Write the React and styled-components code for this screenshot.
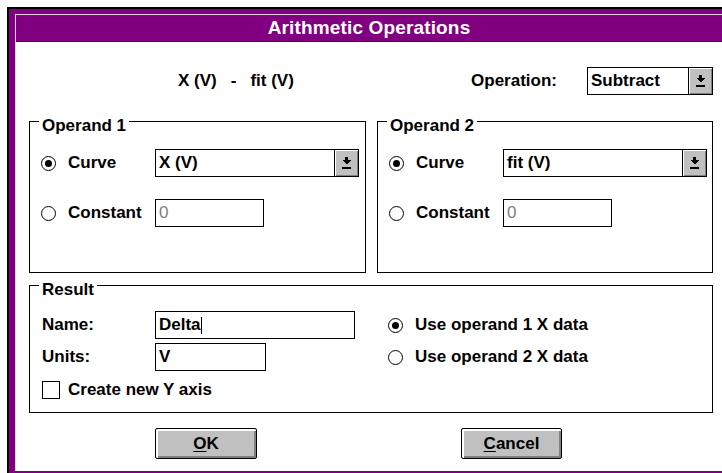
import React from 'react';
import styled, { createGlobalStyle } from 'styled-components';

const GlobalStyle = createGlobalStyle`
  html, body {
    margin: 0;
    padding: 0;
    background: #ffffff;
    overflow: hidden;
  }
  body {
    font-family: "Liberation Sans", Arial, sans-serif;
  }
`;

// The dialog runs off the right and bottom edges of the shot: only the
// left and top edges of its frame show in full.
const Window = styled.div`
  margin: 7px 0 0 7px;
  border-left: 2px solid #000;
  border-top: 2px solid #000;
`;
const Frame = styled.div`
  border-left: 6px solid #800080;
  border-top: 5px solid #800080;
  border-bottom: 2px solid #800080;
`;
const InnerFrame = styled.div`
  border-left: 1px solid #e0d0e0;
  border-top: 1px solid #e0d0e0;
  border-bottom: 1px solid #ffffff;
  background: #ffffff;
`;
const TitleBar = styled.div`
  height: 26px;
  display: flex;
  align-items: center;
  justify-content: center;
  background: #800080;
  border-bottom: 1px solid #202020;
  color: #ffffff;
  font-size: 19px;
  font-weight: bold;
  letter-spacing: 0.15px;
`;
const Client = styled.div`
  box-sizing: border-box;
  height: 428px;
  padding: 25px 0 0 13px;
  color: #000;
  font-size: 17px;
  font-weight: bold;
`;
const Content = styled.div`
  width: 684px;
`;
const TopRow = styled.div`
  display: flex;
  align-items: center;
  height: 28px;
`;
const Expression = styled.div`
  display: flex;
  gap: 14px;
  margin-left: 149px;
`;
const OperationLabel = styled.span`
  margin-left: auto;
  margin-right: 30px;
`;
const Combo = styled.div`
  box-sizing: border-box;
  display: flex;
  width: ${p => p.$width}px;
  height: 28px;
  border: 1px solid #000;
  background: #fff;
`;
const ComboText = styled.div`
  flex: 1;
  display: flex;
  align-items: center;
  padding-left: 3px;
  white-space: pre;
`;
const ComboButton = styled.div`
  width: 23px;
  display: flex;
  align-items: center;
  justify-content: center;
  border-left: 1px solid #000;
  background: #c0c0c0;
  box-shadow: inset 1px 1px #ffffff, inset -1px -1px #808080;
`;
const GroupRow = styled.div`
  display: grid;
  grid-template-columns: 337px 336px;
  column-gap: 11px;
  margin-top: 26px;
`;
const GroupBox = styled.div`
  position: relative;
  box-sizing: border-box;
  height: ${p => p.$height}px;
  border: 1px solid #000;
  padding-top: 27px;
`;
const Caption = styled.span`
  position: absolute;
  top: -5px;
  left: 9px;
  padding: 0 3px;
  line-height: 17px;
  background: #fff;
`;
const OperandGrid = styled.div`
  display: grid;
  grid-template-columns: 114px auto;
  grid-auto-rows: 28px;
  row-gap: 22px;
  padding-left: 11px;
  justify-items: start;
  align-items: center;
`;
const RadioLabel = styled.div`
  display: flex;
  align-items: center;
  gap: 12px;
  white-space: nowrap;
`;
const Radio = styled.span`
  box-sizing: border-box;
  width: 15px;
  height: 15px;
  border-radius: 50%;
  border: 1px solid #000;
  background: #fff;
  display: flex;
  align-items: center;
  justify-content: center;
  &::after {
    content: '';
    width: 7px;
    height: 7px;
    border-radius: 50%;
    background: ${p => (p.$checked ? '#000' : 'transparent')};
  }
`;
const TextBox = styled.div`
  box-sizing: border-box;
  display: flex;
  align-items: center;
  width: ${p => p.$width}px;
  height: 28px;
  padding-left: 3px;
  border: 1px solid #000;
  background: #fff;
  color: ${p => (p.$disabled ? '#808080' : '#000')};
  font-weight: ${p => (p.$disabled ? 'normal' : 'bold')};
`;
const Caret = styled.span`
  width: 1px;
  height: 17px;
  background: #000;
`;
const ResultBox = styled(GroupBox)`
  margin-top: 12px;
  padding-top: 25px;
  display: grid;
  grid-template-columns: 347px 1fr;
`;
const Column = styled.div`
  display: flex;
  flex-direction: column;
  gap: 4px;
  padding-left: ${p => p.$pad}px;
`;
const FieldRow = styled.div`
  display: flex;
  align-items: center;
  height: 28px;
`;
const FieldLabel = styled.span`
  width: 113px;
`;
const CheckRow = styled.div`
  display: flex;
  align-items: center;
  gap: 8px;
  height: 19px;
  margin-top: 5px;
`;
const CheckBox = styled.span`
  box-sizing: border-box;
  width: 18px;
  height: 18px;
  border: 1px solid #000;
  background: #fff;
`;
const ButtonRow = styled.div`
  display: flex;
  gap: 204px;
  margin-top: 15px;
  padding-left: 126px;
`;
const Button = styled.div`
  box-sizing: border-box;
  width: ${p => p.$width}px;
  height: 31px;
  display: flex;
  align-items: center;
  justify-content: center;
  border: 1px solid #000;
  border-radius: 2px;
  background: #c0c0c0;
  box-shadow: inset 2px 2px #ffffff, inset -2px -2px #808080;
  u {
    text-decoration-thickness: 1px;
    text-underline-offset: 2px;
  }
`;

function DropArrow() {
  return (
    <svg width="9" height="12" viewBox="0 0 9 12" shapeRendering="crispEdges">
      <rect x="3" y="0" width="3" height="3" fill="#000" />
      <polygon points="0,3 9,3 4.5,7.5" fill="#000" />
      <rect x="0" y="10" width="9" height="2" fill="#000" />
    </svg>
  );
}

function Dropdown({ value, width }) {
  return (
    <Combo $width={width}>
      <ComboText>{value}</ComboText>
      <ComboButton><DropArrow /></ComboButton>
    </Combo>
  );
}

function RadioOption({ checked, label }) {
  return (
    <RadioLabel>
      <Radio $checked={checked} />
      <span>{label}</span>
    </RadioLabel>
  );
}

function OperandGroup({ title, curve }) {
  return (
    <GroupBox $height={152}>
      <Caption>{title}</Caption>
      <OperandGrid>
        <RadioOption checked label="Curve" />
        <Dropdown value={curve} width={204} />
        <RadioOption label="Constant" />
        <TextBox $width={109} $disabled>0</TextBox>
      </OperandGrid>
    </GroupBox>
  );
}

export default function App() {
  return (
    <>
      <GlobalStyle />
      <Window>
        <Frame>
          <InnerFrame>
            <TitleBar>Arithmetic Operations</TitleBar>
            <Client>
              <Content>
                <TopRow>
                  <Expression>
                    <span>X (V)</span>
                    <span>-</span>
                    <span>fit (V)</span>
                  </Expression>
                  <OperationLabel>Operation:</OperationLabel>
                  <Dropdown value="Subtract" width={126} />
                </TopRow>
                <GroupRow>
                  <OperandGroup title="Operand 1" curve="X (V)" />
                  <OperandGroup title="Operand 2" curve="fit (V)" />
                </GroupRow>
                <ResultBox $height={128}>
                  <Caption>Result</Caption>
                  <Column $pad={12}>
                    <FieldRow>
                      <FieldLabel>Name:</FieldLabel>
                      <TextBox $width={200}>Delta<Caret /></TextBox>
                    </FieldRow>
                    <FieldRow>
                      <FieldLabel>Units:</FieldLabel>
                      <TextBox $width={111}>V</TextBox>
                    </FieldRow>
                    <CheckRow>
                      <CheckBox />
                      <span>Create new Y axis</span>
                    </CheckRow>
                  </Column>
                  <Column $pad={11}>
                    <FieldRow><RadioOption checked label="Use operand 1 X data" /></FieldRow>
                    <FieldRow><RadioOption label="Use operand 2 X data" /></FieldRow>
                  </Column>
                </ResultBox>
                <ButtonRow>
                  <Button $width={102}><span><u>O</u>K</span></Button>
                  <Button $width={101}><span><u>C</u>ancel</span></Button>
                </ButtonRow>
              </Content>
            </Client>
          </InnerFrame>
        </Frame>
      </Window>
    </>
  );
}
